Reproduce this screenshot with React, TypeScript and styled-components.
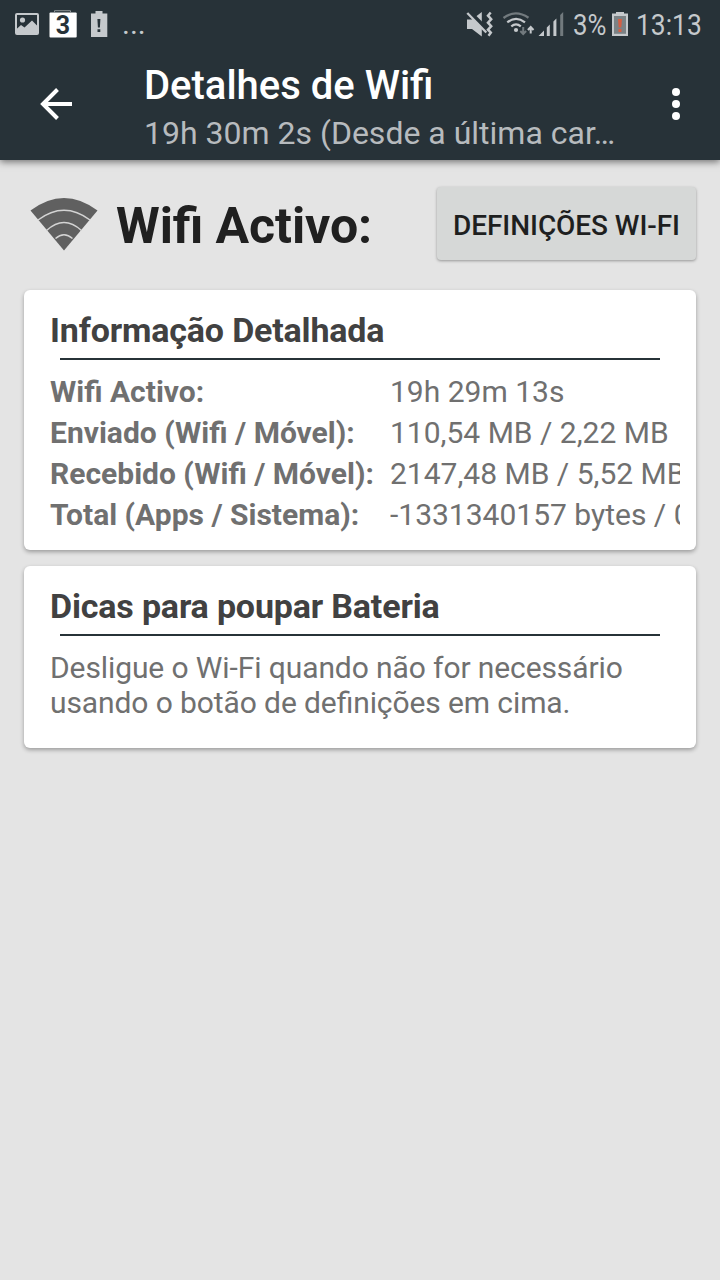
import React from "react";
import styled, { createGlobalStyle } from "styled-components";

const GlobalStyle = createGlobalStyle`
  * { box-sizing: border-box; }
  body { margin: 0; background: #e4e4e4; font-family: Roboto, "Liberation Sans", sans-serif; }
`;

const Screen = styled.div`
  width: 720px;
  height: 1280px;
  overflow: hidden;
  display: flex;
  flex-direction: column;
  background: #e4e4e4;
`;

const Header = styled.header`
  height: 160px;
  flex: none;
  background: #273238;
  box-shadow: 0 2px 7px rgba(0, 0, 0, 0.5);
`;

const StatusBar = styled.div`
  height: 48px;
  display: flex;
  justify-content: space-between;
  color: #c5c9cc;
  svg { display: block; flex: none; }
`;

const StatusText = styled.div<{ $width: number; $scale: number; $gap: number }>`
  width: ${(p) => p.$width}px;
  margin-left: ${(p) => p.$gap}px;
  font-size: 30px;
  line-height: 49px;
  white-space: nowrap;
  span {
    display: inline-block;
    transform: scaleX(${(p) => p.$scale});
    transform-origin: 0 50%;
  }
`;

const StatusGroup = styled.div`
  display: flex;
`;

const Toolbar = styled.div`
  height: 112px;
  display: flex;
`;

const IconButton = styled.button<{ $width: number }>`
  width: ${(p) => p.$width}px;
  height: 112px;
  padding: 0;
  border: 0;
  background: none;
  svg { display: block; }
`;

const Titles = styled.div`
  width: 480px;
  margin-left: 32px;
  padding-top: 14px;
  white-space: nowrap;
`;

const Title = styled.h1`
  margin: 0;
  font-size: 40px;
  font-weight: 500;
  line-height: 47px;
  color: #fff;
`;

const Subtitle = styled.div`
  margin-top: 5px;
  font-size: 32px;
  line-height: 38px;
  color: #b7bbbe;
`;

const Summary = styled.section`
  height: 130px;
  flex: none;
  display: flex;
  align-items: flex-start;
  padding: 27px 24px 0 28px;
`;

const Heading = styled.h2`
  margin: 10px 0 0 16px;
  flex: 1;
  font-size: 50px;
  font-weight: 700;
  line-height: 58px;
  letter-spacing: -0.08px;
  font-feature-settings: "liga" 1;
  color: #202020;
  white-space: nowrap;
`;

const SettingsButton = styled.button`
  width: 259px;
  height: 73px;
  padding: 4px 0 0;
  border: 0;
  border-radius: 4px;
  background: #d6d8d7;
  box-shadow: 0 1px 3px rgba(0, 0, 0, 0.35);
  font: 500 28px/33px Roboto, sans-serif;
  letter-spacing: -0.07px;
  color: #1e1f1f;
  white-space: nowrap;
`;

const Card = styled.section<{ $height: number }>`
  height: ${(p) => p.$height}px;
  flex: none;
  margin: 0 24px 16px;
  padding: 20px 16px 0 26px;
  border-radius: 6px;
  background: #fff;
  box-shadow: 0 2px 4px rgba(0, 0, 0, 0.32);
`;

const CardTitle = styled.h3`
  margin: 0;
  font-size: 34px;
  font-weight: 700;
  line-height: 40px;
  letter-spacing: -0.17px;
  color: #414141;
`;

const Divider = styled.hr`
  height: 2px;
  margin: 8px 20px 0 10px;
  border: 0;
  background: #273238;
`;

const Details = styled.dl`
  margin: 11px 0 0;
  display: grid;
  grid-template-columns: 340px 290px;
  font-size: 30px;
  line-height: 41px;
  color: #707070;
  white-space: nowrap;
`;

const Label = styled.dt`
  font-weight: 700;
`;

const Value = styled.dd`
  margin: 0;
  overflow: hidden;
`;

const Tip = styled.p`
  margin: 14px 0 0;
  font-size: 30px;
  line-height: 35px;
  letter-spacing: -0.1px;
  font-feature-settings: "liga" 1;
  color: #707070;
  white-space: nowrap;
`;

const rows = [
  ["Wifi Activo:", "19h 29m 13s"],
  ["Enviado (Wifi / Móvel):", "110,54 MB / 2,22 MB"],
  ["Recebido (Wifi / Móvel):", "2147,48 MB / 5,52 MB"],
  ["Total (Apps / Sistema):", "-1331340157 bytes / 0"],
];

const NotificationIcons = () => (
  <svg width="110" height="48" viewBox="0 0 110 48">
    <rect x="16" y="14" width="22" height="20" rx="1" fill="none" stroke="#c5c9cc" strokeWidth="2" />
    <circle cx="22.500" cy="20" r="2.600" fill="#c5c9cc" />
    <path d="M16 29.500l5-4.500 3.500 2.500 7.500-7 6 6V34H16z" fill="#c5c9cc" />
    <path d="M54.500 12v-1.300h16V12" fill="none" stroke="#8d9497" strokeWidth="1" />
    <rect x="49.500" y="12.500" width="27.200" height="25" rx="1" fill="#fff" />
    <path d="M91 13.500h4.500V11h7v2.500h4.800V37H91z" fill="#c5c9cc" />
    <path d="M97.400 19h3l-.5 8.500h-2zM97.500 29.300h2.800v2.700h-2.800z" fill="#273238" />
  </svg>
);

const NotificationArea = styled.div`
  position: relative;
  display: flex;
`;

const DayNumber = styled.span`
  position: absolute;
  left: 50px;
  top: 12px;
  width: 26px;
  text-align: center;
  font-size: 25px;
  font-weight: 700;
  line-height: 27px;
  color: #273238;
`;

const Ellipsis = styled.span`
  margin-left: 12px;
  font-size: 30px;
  line-height: 47px;
`;

const SignalIcons = () => (
  <svg width="100" height="48" viewBox="465 0 100 48">
    <path d="M467 19.500h5l9.800-7.500V36.500L472 29h-5z" fill="#c5c9cc" />
    <path d="M468.500 11L488.500 31" stroke="#273238" strokeWidth="4" />
    <path d="M467.300 13L486.300 32.500" stroke="#c5c9cc" strokeWidth="2.300" />
    <path d="M490.700 12.500l-2.700 3.200 3.200 3.500-3.200 3.500 3.200 3.500-3.200 3.500 2.800 3-2.300 3" fill="none" stroke="#c5c9cc" strokeWidth="2.500" />
    <g fill="none" strokeWidth="2.300">
      <path d="M503.500 18Q515.500 9 528.500 17.800" stroke="#727a7e" />
      <path d="M507.300 22.300Q516 15.500 525 22.300" stroke="#c5c9cc" />
      <path d="M511.300 26.300Q516 22.500 520.800 26.300" stroke="#c5c9cc" />
    </g>
    <circle cx="516" cy="30" r="2.100" fill="#c5c9cc" />
    <path d="M523.200 27v6.500M520.300 31l2.900 3 2.900-3" fill="none" stroke="#727a7e" strokeWidth="2" />
    <path d="M530.700 33.500V27M527.900 30l2.800-3 2.800 3" fill="none" stroke="#c5c9cc" strokeWidth="2" />
    <path d="M538.500 36l5.500-5.500V36zM546.800 27.500l3-3V36h-3zM553.400 21.500l3-3V36h-3z" fill="#c5c9cc" />
    <path d="M560.200 15l3-3v24h-3z" fill="#727a7e" />
  </svg>
);

const BatteryIcon = () => (
  <svg width="18" height="48" viewBox="611 0 18 48">
    <path d="M612 13.500h4V12h8v1.500h4V36h-16z" fill="#c5c9cc" />
    <path d="M614 16h12v17.800h-12z" fill="#7b8285" />
    <path d="M618 19h4l-.7 8.500h-2.600zM618.500 29h3v3h-3z" fill="#d45f45" />
  </svg>
);

const WifiIcon = () => (
  <svg width="72" height="70" viewBox="28 187 72 70">
    <path d="M30.500 210.500Q64 185.500 97.500 210.500L64 250.500z" fill="#606060" />
    <g fill="none" stroke="#d4d4d4" strokeWidth="1.500">
      <path d="M38 220Q64 200.500 90 220" />
      <path d="M46.500 230.500Q64 214.500 81.500 230.500" />
      <path d="M55.500 238.500Q64 231 72.500 238.500" />
    </g>
  </svg>
);

export default function App() {
  return (
    <Screen>
      <GlobalStyle />
      <Header>
        <StatusBar>
          <NotificationArea>
            <NotificationIcons />
            <DayNumber>3</DayNumber>
            <Ellipsis>...</Ellipsis>
          </NotificationArea>
          <StatusGroup>
            <SignalIcons />
            <StatusText $width={38} $scale={0.86} $gap={8}><span>3%</span></StatusText>
            <BatteryIcon />
            <StatusText $width={84} $scale={0.88} $gap={7}><span>13:13</span></StatusText>
          </StatusGroup>
        </StatusBar>
        <Toolbar>
          <IconButton $width={112} aria-label="Voltar">
            <svg width="112" height="112" viewBox="0 0 112 112">
              <path d="M72 56H43M57.500 41.500L43 56l14.500 14.500" fill="none" stroke="#fff" strokeWidth="4" />
            </svg>
          </IconButton>
          <Titles>
            <Title>Detalhes de Wifi</Title>
            <Subtitle>19h 30m 2s (Desde a última car…</Subtitle>
          </Titles>
          <IconButton $width={96} aria-label="Mais opções">
            <svg width="96" height="112" viewBox="0 0 96 112" fill="#fff">
              <circle cx="52" cy="44" r="4" />
              <circle cx="52" cy="56" r="4" />
              <circle cx="52" cy="68" r="4" />
            </svg>
          </IconButton>
        </Toolbar>
      </Header>
      <Summary>
        <WifiIcon />
        <Heading>Wifi Activo:</Heading>
        <SettingsButton>DEFINIÇÕES WI-FI</SettingsButton>
      </Summary>
      <Card $height={260}>
        <CardTitle>Informação Detalhada</CardTitle>
        <Divider />
        <Details>
          {rows.map(([label, value]) => (
            <React.Fragment key={label}>
              <Label>{label}</Label>
              <Value>{value}</Value>
            </React.Fragment>
          ))}
        </Details>
      </Card>
      <Card $height={182}>
        <CardTitle>Dicas para poupar Bateria</CardTitle>
        <Divider />
        <Tip>
          Desligue o Wi-Fi quando não for necessário
          <br />
          usando o botão de definições em cima.
        </Tip>
      </Card>
    </Screen>
  );
}
